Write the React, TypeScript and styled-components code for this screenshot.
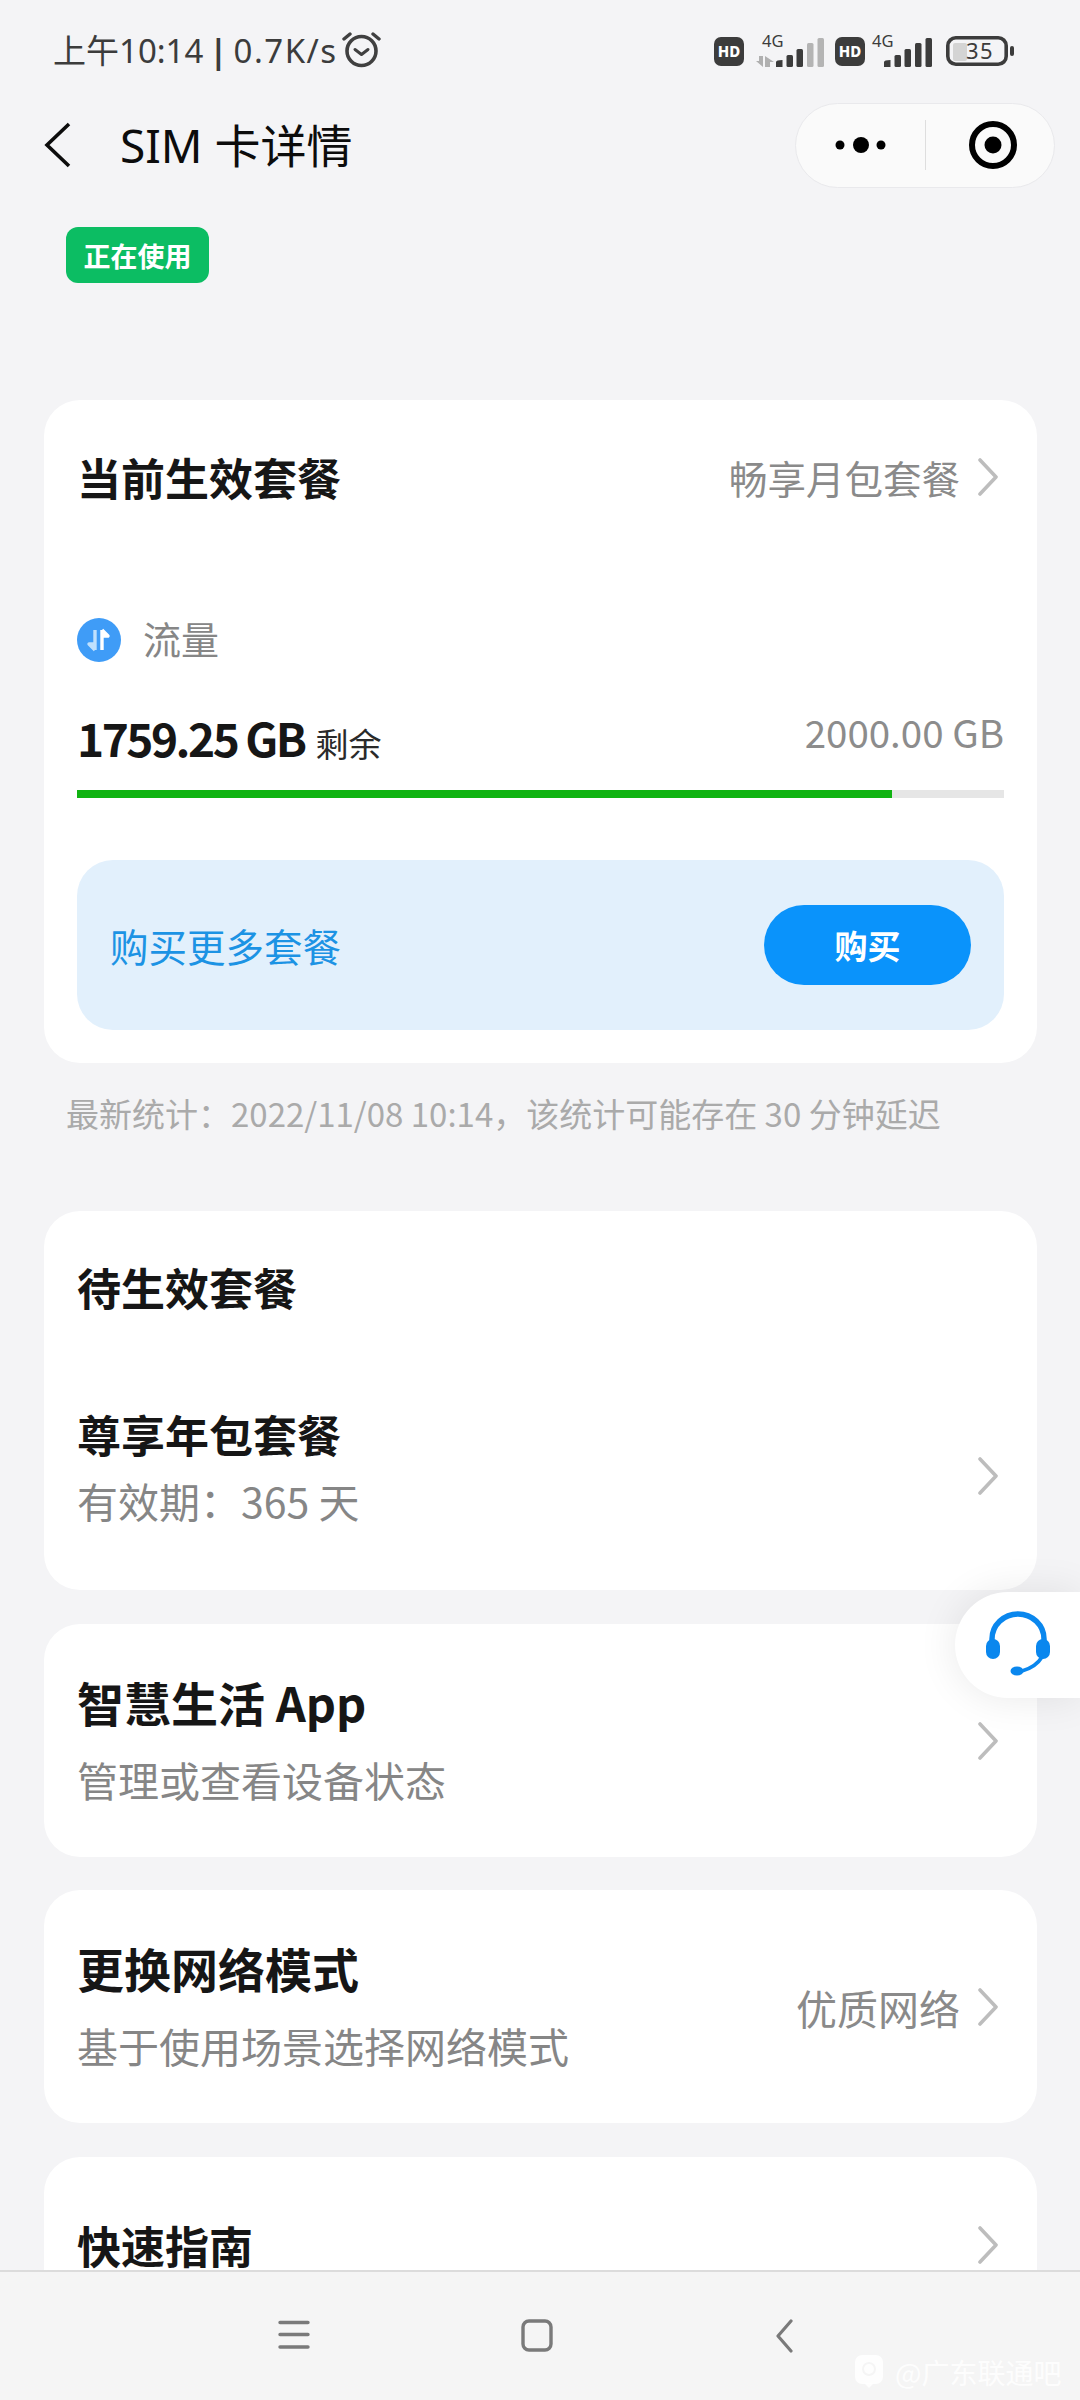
import React from "react";
import styled, { createGlobalStyle } from "styled-components";

const CJK = `"Noto Sans CJK SC", "Noto Sans", sans-serif`;

const Global = createGlobalStyle`
  html, body { margin: 0; padding: 0; background: #f4f4f6; }
  * { box-sizing: border-box; }
`;

const Screen = styled.div`
  position: relative;
  width: 1080px;
  height: 2400px;
  overflow: hidden;
  display: flex;
  flex-direction: column;
  background: #f4f4f6;
  font-family: ${CJK};
`;
const Scroll = styled.div`
  height: 2270px;
  overflow: hidden;
  flex: none;
`;
const StatusBar = styled.div`
  height: 102px;
  padding: 0 66px 0 53px;
  display: flex;
  align-items: center;
  justify-content: space-between;
  color: #3c3c3c;
`;
const StatusLeft = styled.div`
  display: flex;
  align-items: center;
  font-family: "Noto Sans", ${CJK};
  font-size: 33px;
  line-height: 40px;
  white-space: pre;
`;
const Pipe = styled.span`
  font-weight: 700;
  margin-left: 6px;
`;
const Speed = styled.span`
  margin-left: 6px;
  letter-spacing: 1.5px;
`;
const AlarmSlot = styled.span`
  display: flex;
  margin: -2px 0 0 4px;
`;
const StatusRight = styled.div`
  display: flex;
  align-items: center;
`;
const Sim = styled.div<{ $gap: number }>`
  display: flex;
  margin-left: ${(p) => p.$gap}px;
  svg {
    overflow: visible;
  }
`;
const Header = styled.div`
  height: 86px;
  padding: 0 25px 0 44px;
  display: flex;
  align-items: center;
`;
const Title = styled.div`
  margin-left: 46px;
  flex: 1;
  font-size: 46px;
  line-height: 60px;
  color: #0c0c0c;
  font-family: "Noto Sans", ${CJK};
`;
const Capsule = styled.div`
  width: 260px;
  height: 85px;
  border-radius: 43px;
  background: #fafafa;
  border: 1px solid #e9e9ec;
  display: flex;
  align-items: center;
`;
const CapsuleCell = styled.div`
  flex: none;
  width: 129px;
  height: 50px;
  display: flex;
  align-items: center;
  justify-content: center;
  & + & {
    border-left: 1px solid #dedede;
    padding-left: 6px;
  }
`;
const Badge = styled.div`
  margin: 39px 0 0 66px;
  width: 143px;
  height: 56px;
  border-radius: 12px;
  background: #0cbd63;
  color: #fff;
  font-size: 27px;
  font-weight: 700;
  display: flex;
  align-items: center;
  justify-content: center;
`;
const Card = styled.div<{ $top: number; $h?: number }>`
  margin: ${(p) => p.$top}px 43px 0 44px;
  background: #fff;
  border-radius: 36px;
  ${(p) => (p.$h ? `height: ${p.$h}px;` : "")}
`;
const CardHead = styled.div<{ $h: number }>`
  height: ${(p) => p.$h}px;
  padding: 0 39px 6px 33px;
  display: flex;
  align-items: center;
  justify-content: space-between;
`;
const Heading = styled.div<{ $size?: number; $line?: number }>`
  font-size: ${(p) => p.$size ?? 44}px;
  line-height: ${(p) => p.$line ?? 62}px;
  font-weight: 700;
  color: #161616;
`;
const SideValue = styled.div<{ $size: number }>`
  display: flex;
  align-items: center;
  gap: 18px;
  font-size: ${(p) => p.$size}px;
  color: #8a8a8a;
  line-height: 50px;
`;
const MeterLabel = styled.div`
  margin: 56px 0 0 33px;
  height: 48px;
  padding-bottom: 6px;
  display: flex;
  align-items: center;
  gap: 22px;
  font-size: 38px;
  color: #868686;
`;
const MeterIcon = styled.span`
  display: flex;
  margin-top: 6px;
`;
const AmountRow = styled.div`
  margin: 46px 33px 0;
  height: 60px;
  display: flex;
  align-items: center;
  justify-content: space-between;
`;
const Amount = styled.div`
  font-size: 46px;
  font-weight: 700;
  color: #161616;
  line-height: 60px;
  display: flex;
  align-items: baseline;
`;
const AmountValue = styled.span`
  letter-spacing: -2.5px;
`;
const AmountUnit = styled.span`
  font-size: 33px;
  font-weight: 400;
  margin-left: 11px;
  color: #2a2a2a;
`;
const Total = styled.div`
  font-size: 38.5px;
  color: #8c8c8c;
  margin-top: -19px;
`;
const Track = styled.div`
  margin: 20px 33px 0;
  height: 8px;
  background: #e6e6e6;
`;
const Fill = styled.div`
  height: 100%;
  background: #10b312;
`;
const BuyWrap = styled.div`
  padding: 62px 33px 33px;
`;
const BuyBox = styled.div`
  height: 170px;
  padding: 0 33px;
  border-radius: 36px;
  background: #e2f0fc;
  display: flex;
  align-items: center;
  justify-content: space-between;
`;
const BuyText = styled.div`
  font-size: 38.5px;
  color: #1c93e4;
`;
const BuyButton = styled.div`
  width: 207px;
  height: 80px;
  border-radius: 40px;
  background: #0a93fb;
  color: #fff;
  font-size: 33px;
  font-weight: 700;
  display: flex;
  align-items: center;
  justify-content: center;
`;
const Note = styled.div`
  margin: 25px 0 0 66px;
  font-size: 33px;
  line-height: 50px;
  color: #aaaaaa;
`;
const ItemRow = styled.div<{ $pad: number }>`
  padding: ${(p) => p.$pad}px 39px 0 33px;
  display: flex;
  align-items: center;
  justify-content: space-between;
`;
const Sub = styled.div<{ $gap?: number }>`
  margin-top: ${(p) => p.$gap ?? 15}px;
  font-size: 41px;
  line-height: 62px;
  color: #868686;
`;
const ChevronSlot = styled.span<{ $drop?: number }>`
  display: flex;
  margin-top: ${(p) => p.$drop ?? 0}px;
`;

const Chevron = ({ drop }: { drop?: number }) => (
  <ChevronSlot $drop={drop}>
    <svg width="20" height="38" viewBox="0 0 20 38" fill="none">
      <path d="M2 2 L18 19 L2 36" stroke="#bdbdbd" strokeWidth="3.6" strokeLinecap="round" strokeLinejoin="round" />
    </svg>
  </ChevronSlot>
);

const Float = styled.div`
  position: absolute;
  left: 955px;
  top: 1592px;
  width: 125px;
  height: 106px;
  border-radius: 53px 0 0 53px;
  background: #fff;
  box-shadow: 0 0 40px rgba(0, 0, 0, 0.09);
  display: flex;
  align-items: center;
  padding-left: 29px;
`;
const NavBar = styled.div`
  flex: 1;
  background: #f5f5f5;
  border-top: 2px solid #dcdcdc;
  padding: 47px 0 0 278px;
  display: flex;
  align-items: flex-start;
`;
const NavIcon = styled.span<{ $gap: number }>`
  display: flex;
  margin-left: ${(p) => p.$gap}px;
`;
const Watermark = styled.div`
  position: absolute;
  left: 855px;
  top: 2355px;
  display: flex;
  align-items: center;
  gap: 12px;
  color: rgba(255, 255, 255, 0.85);
  font-size: 28px;
  line-height: 34px;
`;

const Hd = () => (
  <svg width="30" height="29" viewBox="0 0 30 29">
    <rect width="30" height="29" rx="7" fill="#3c3c3c" />
    <text x="15" y="20" fontSize="15" fontWeight="800" fill="#fff" textAnchor="middle" fontFamily="Noto Sans">HD</text>
  </svg>
);

const Signal = ({ x, dim }: { x: number; dim?: boolean }) => {
  const far = dim ? "#b4b4b4" : "#3c3c3c";
  return (
    <g transform={`translate(${x} 0)`}>
      <path d="M0 36V31q0-2 6.5-2V36z" fill="#3c3c3c" />
      <rect x="10.5" y="24" width="6.5" height="12" rx="1.5" fill="#3c3c3c" />
      <rect x="20.5" y="18" width="6.5" height="18" rx="1.5" fill="#3c3c3c" />
      <rect x="31" y="12" width="6.5" height="24" rx="1.5" fill={far} />
      <rect x="41.5" y="7" width="6.5" height="29" rx="1.5" fill={far} />
    </g>
  );
};

export default function App() {
  return (
    <Screen>
      <Global />
      <Scroll>
        <StatusBar>
          <StatusLeft>
            上午10:14
            <Pipe>|</Pipe>
            <Speed>0.7K/s</Speed>
            <AlarmSlot>
              <svg width="40" height="38" viewBox="0 0 40 38" fill="none" stroke="#404040">
                <circle cx="19.5" cy="20" r="14.5" strokeWidth="3.6" />
                <path d="M13 18.5l6.5 5 6.5-5" strokeWidth="3" strokeLinecap="round" strokeLinejoin="round" />
                <path d="M2 8l6-5M37 8l-6-5" strokeWidth="3.4" strokeLinecap="round" />
              </svg>
            </AlarmSlot>
          </StatusLeft>
          <StatusRight>
            <Hd />
            <Sim $gap={10}>
              <svg width="70" height="40" viewBox="0 0 70 40">
                <text x="8" y="16" fontSize="16.5" fill="#3c3c3c" fontFamily="Noto Sans">4G</text>
                <path d="M2 30h3v-5h4v11z" fill="#b0b0b0" />
                <path d="M11 25l9 6h-4v5h-5z" fill="#b0b0b0" />
                <Signal x={22} dim />
              </svg>
            </Sim>
            <Sim $gap={11}>
              <Hd />
            </Sim>
            <Sim $gap={5}>
              <svg width="64" height="40" viewBox="0 0 64 40">
                <text x="2" y="16" fontSize="16.5" fill="#3c3c3c" fontFamily="Noto Sans">4G</text>
                <Signal x={14} />
              </svg>
            </Sim>
            <Sim $gap={12}>
              <svg width="68" height="32" viewBox="0 0 68 32">
                <rect x="1.8" y="2.8" width="58.4" height="26.4" rx="8" fill="none" stroke="#3c3c3c" strokeWidth="3.6" />
                <rect x="7" y="8" width="14" height="18" rx="2" fill="#d4d4d4" />
                <text x="20" y="24" fontSize="22" fill="#3c3c3c" fontFamily="Noto Sans" letterSpacing="1.5">35</text>
                <rect x="64" y="11" width="4" height="10" rx="2" fill="#3c3c3c" />
              </svg>
            </Sim>
          </StatusRight>
        </StatusBar>
        <Header>
          <svg width="30" height="46" viewBox="0 0 30 46" fill="none">
            <path d="M25 2 L3 23 L25 44" stroke="#0c0c0c" strokeWidth="3.6" />
          </svg>
          <Title>SIM 卡详情</Title>
          <Capsule>
            <CapsuleCell>
              <svg width="52" height="18" viewBox="0 0 52 18" fill="#000">
                <circle cx="5" cy="9" r="4.5" />
                <circle cx="26" cy="9" r="8" />
                <circle cx="46" cy="9" r="4.5" />
              </svg>
            </CapsuleCell>
            <CapsuleCell>
              <svg width="50" height="50" viewBox="0 0 50 50" fill="none">
                <circle cx="25" cy="25" r="21" stroke="#000" strokeWidth="6" />
                <circle cx="25" cy="25" r="8.5" fill="#000" />
              </svg>
            </CapsuleCell>
          </Capsule>
        </Header>
        <Badge>正在使用</Badge>

        <Card $top={117}>
          <CardHead $h={160}>
            <Heading>当前生效套餐</Heading>
            <SideValue $size={38.5}>
              畅享月包套餐
              <Chevron />
            </SideValue>
          </CardHead>
          <MeterLabel>
            <MeterIcon>
              <svg width="44" height="44" viewBox="0 0 44 44">
                <circle cx="22" cy="22" r="22" fill="#3f9cf7" />
                <path d="M18 12v20M18 32l-6-6h6" stroke="#bfe0fd" strokeWidth="3.4" fill="none" strokeLinejoin="round" />
                <path d="M25 32V12M25 12l6 6h-6" stroke="#fff" strokeWidth="3.4" fill="none" strokeLinejoin="round" />
              </svg>
            </MeterIcon>
            流量
          </MeterLabel>
          <AmountRow>
            <Amount>
              <AmountValue>1759.25 GB</AmountValue>
              <AmountUnit>剩余</AmountUnit>
            </Amount>
            <Total>2000.00 GB</Total>
          </AmountRow>
          <Track>
            <Fill style={{ width: `${(1759.25 / 2000) * 100}%` }} />
          </Track>
          <BuyWrap>
            <BuyBox>
              <BuyText>购买更多套餐</BuyText>
              <BuyButton>购买</BuyButton>
            </BuyBox>
          </BuyWrap>
        </Card>
        <Note>最新统计：2022/11/08 10:14，该统计可能存在 30 分钟延迟</Note>

        <Card $top={73} $h={379}>
          <CardHead $h={158}>
            <Heading>待生效套餐</Heading>
          </CardHead>
          <ItemRow $pad={34}>
            <div>
              <Heading>尊享年包套餐</Heading>
              <Sub $gap={4}>有效期：365 天</Sub>
            </div>
            <Chevron drop={18} />
          </ItemRow>
        </Card>

        <Card $top={34} $h={233}>
          <ItemRow $pad={47}>
            <div>
              <Heading $size={47}>智慧生活 App</Heading>
              <Sub>管理或查看设备状态</Sub>
            </div>
            <Chevron />
          </ItemRow>
        </Card>

        <Card $top={33} $h={233}>
          <ItemRow $pad={47}>
            <div>
              <Heading $size={47}>更换网络模式</Heading>
              <Sub>基于使用场景选择网络模式</Sub>
            </div>
            <SideValue $size={41}>
              优质网络
              <Chevron />
            </SideValue>
          </ItemRow>
        </Card>

        <Card $top={34} $h={233}>
          <ItemRow $pad={67}>
            <Heading $line={42}>快速指南</Heading>
            <Chevron />
          </ItemRow>
        </Card>
      </Scroll>

      <NavBar>
        <NavIcon $gap={0}>
          <svg width="32" height="32" viewBox="0 0 32 32" stroke="#7a7a7a" strokeWidth="3.4" strokeLinecap="round">
            <path d="M2 3.5h28M2 15.5h28M2 28h28" />
          </svg>
        </NavIcon>
        <NavIcon $gap={211}>
          <svg width="32" height="34" viewBox="0 0 32 34" fill="none">
            <rect x="2" y="2" width="28" height="29" rx="6" stroke="#7a7a7a" strokeWidth="3.4" />
          </svg>
        </NavIcon>
        <NavIcon $gap={222}>
          <svg width="18" height="34" viewBox="0 0 18 34" fill="none">
            <path d="M16 2L3 17l13 15" stroke="#7a7a7a" strokeWidth="3.2" strokeLinecap="round" strokeLinejoin="round" />
          </svg>
        </NavIcon>
      </NavBar>

      <Float>
        <svg width="68" height="68" viewBox="0 0 68 68">
          <path d="M8 36V28a26 25 0 0 1 52 0v8" fill="none" stroke="#0a87ee" strokeWidth="5.5" />
          <rect x="2" y="28" width="14" height="20" rx="7" fill="#0a87ee" />
          <rect x="52" y="28" width="14" height="20" rx="7" fill="#0a87ee" />
          <path d="M58 46Q52 56 38 60" fill="none" stroke="#0a87ee" strokeWidth="3.6" />
          <ellipse cx="33" cy="60" rx="6.5" ry="4.5" fill="#0a87ee" />
        </svg>
      </Float>

      <Watermark>
        <svg width="28" height="34" viewBox="0 0 28 34">
          <rect width="28" height="29" rx="7" fill="rgba(255,255,255,0.85)" />
          <path d="M9 28l5 5 5-5z" fill="rgba(255,255,255,0.85)" />
          <circle cx="14" cy="14" r="6" fill="none" stroke="#f5f5f5" strokeWidth="2" />
        </svg>
        @广东联通吧
      </Watermark>
    </Screen>
  );
}
